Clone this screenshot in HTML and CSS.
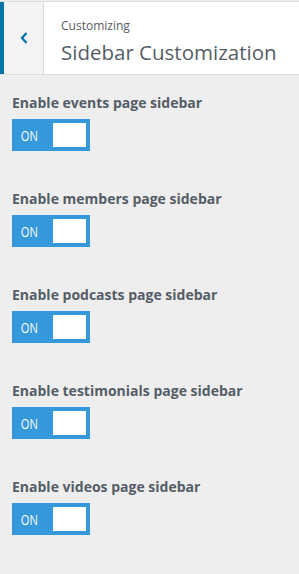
FILE: index.html
```html
<!DOCTYPE html>
<html>
<head>
    <meta charset="UTF-8">
    <link rel="stylesheet" href="styles.css">
</head>
<body>
    <div class="panel">
        <!-- Header -->
        <div class="panel-header">
            <button class="back-btn" aria-label="Back">
                <svg width="10" height="14" viewBox="0 0 10 14"><path d="M7.5 2 L3 7 L7.5 12" fill="none" stroke="#0073aa" stroke-width="2.2"/></svg>
            </button>
            <div class="panel-title">
                <span class="crumb">Customizing</span>
                <h2>Sidebar Customization</h2>
            </div>
        </div>

        <!-- Controls -->
        <div class="controls">
            <div class="control">
                <label>Enable events page sidebar</label>
                <div class="toggle"><span class="toggle-text">ON</span><span class="knob"></span></div>
            </div>
            <div class="control">
                <label>Enable members page sidebar</label>
                <div class="toggle"><span class="toggle-text">ON</span><span class="knob"></span></div>
            </div>
            <div class="control">
                <label>Enable podcasts page sidebar</label>
                <div class="toggle"><span class="toggle-text">ON</span><span class="knob"></span></div>
            </div>
            <div class="control">
                <label>Enable testimonials page sidebar</label>
                <div class="toggle"><span class="toggle-text">ON</span><span class="knob"></span></div>
            </div>
            <div class="control">
                <label>Enable videos page sidebar</label>
                <div class="toggle"><span class="toggle-text">ON</span><span class="knob"></span></div>
            </div>
        </div>
    </div>
</body>
</html>
```

FILE: styles.css
```css
body {
    margin: 0;
    background-color: #eeeeee;
    font-family: "Open Sans", "Noto Sans", sans-serif;
    color: #555d66;
}

/* Header */
.panel-header {
    display: flex;
    height: 72px;
    background-color: #ffffff;
    border-top: 1px solid #dddddd;
    border-bottom: 1px solid #dddddd;
    margin-top: 1px;
}

.back-btn {
    width: 44px;
    padding: 0;
    background-color: #f3f3f5;
    border: none;
    border-left: 4px solid #0073aa;
    border-right: 1px solid #dddddd;
    display: flex;
    align-items: center;
    justify-content: center;
}

.panel-title {
    padding: 15px 0 0 17px;
}

.crumb {
    display: block;
    font-size: 12px;
    line-height: 18px;
    color: #555d66;
}

h2 {
    margin: 3px 0 0;
    font-size: 20.5px;
    font-weight: normal;
    line-height: 28px;
}

/* Controls */
.controls {
    padding: 18px 12px 0;
}

.control {
    margin-bottom: 38px;
}

label {
    display: block;
    font-size: 14px;
    font-weight: bold;
    line-height: 20px;
    margin-bottom: 6px;
}

.toggle {
    display: flex;
    align-items: center;
    justify-content: space-between;
    width: 70px;
    height: 24px;
    padding: 4px;
    background-color: #3498db;
}

.toggle-text {
    padding-left: 6px;
    color: #ffffff;
    font-size: 14px;
    transform: scaleX(0.8);
    transform-origin: left center;
}

.knob {
    width: 33px;
    height: 24px;
    background-color: #ffffff;
}
```
